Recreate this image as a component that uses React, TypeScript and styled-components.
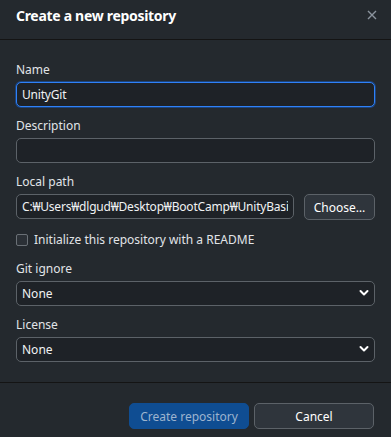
import React from "react";
import styled, { createGlobalStyle } from "styled-components";

const Global = createGlobalStyle`
  html, body { margin: 0; padding: 0; background: #24292e; }
  * { box-sizing: border-box; }
  body { font-family: "Noto Sans", "Open Sans", sans-serif; }
`;

const Dialog = styled.div`
  width: 391px;
  height: 437px;
  background: #24292e;
  color: #e1e4e8;
  display: flex;
  flex-direction: column;
  overflow: hidden;
`;

const Header = styled.div`
  height: 40px;
  padding: 0 16px;
  display: flex;
  align-items: center;
  justify-content: space-between;
  border-bottom: 1px solid #141414;
`;

const Title = styled.h1`
  margin: 0;
  font-size: 14px;
  font-weight: 700;
  color: #ffffff;
  letter-spacing: -0.3px;
  margin-top: -9px;
`;

const Close = styled.button`
  background: none;
  border: none;
  padding: 0;
  width: 12px;
  height: 12px;
  margin-top: -9px;
  margin-right: -3px;
  display: flex;
  align-items: center;
  justify-content: center;
  color: #8b949e;
`;

const Body = styled.div`
  padding: 22px 16px 0;
  display: flex;
  flex-direction: column;
`;

const Field = styled.div`
  display: flex;
  flex-direction: column;
  margin-bottom: 11px;
`;

const Label = styled.label`
  font-size: 12px;
  line-height: 16px;
  color: #e1e4e8;
  margin-bottom: 4px;
`;

const TextInput = styled.input<{ $focused?: boolean }>`
  height: 25px;
  width: 100%;
  min-width: 0;
  background: #1e2227;
  border: 1px solid ${(p) => (p.$focused ? "#2f81f7" : "#5c6268")};
  box-shadow: ${(p) => (p.$focused ? "0 0 0 1px rgba(20,100,220,0.45)" : "none")};
  border-radius: 5px;
  color: #f0f2f4;
  font-family: "Noto Sans", "Open Sans", sans-serif;
  font-size: 12px;
  letter-spacing: -0.2px;
  padding: 0 5px;
  outline: none;
  caret-color: #ffffff;
`;

const Row = styled.div`
  display: flex;
  gap: 10px;
`;

const Button = styled.button<{ $primary?: boolean; $w?: number }>`
  height: 26px;
  width: ${(p) => (p.$w ? `${p.$w}px` : "auto")};
  flex: none;
  border-radius: 5px;
  font-family: "Noto Sans", "Open Sans", sans-serif;
  font-size: 12px;
  padding: 0 6px;
  background: ${(p) => (p.$primary ? "#0f4d92" : "#2f353c")};
  border: 1px solid ${(p) => (p.$primary ? "#0f4d92" : "#5c6268")};
  color: ${(p) => (p.$primary ? "#9db4cf" : "#ffffff")};
`;

const CheckRow = styled.label`
  display: flex;
  align-items: center;
  gap: 6px;
  font-size: 12px;
  line-height: 18px;
  color: #e1e4e8;
  margin: 0 0 12px;
`;

const Box = styled.span`
  width: 12px;
  height: 12px;
  border: 1px solid #6a7076;
  border-radius: 2px;
  background: #2b3036;
  flex: none;
`;

const SelectWrap = styled.div`
  position: relative;
  height: 25px;
`;

const Select = styled.div`
  height: 25px;
  background: #1e2227;
  border: 1px solid #5c6268;
  border-radius: 5px;
  color: #f0f2f4;
  font-size: 12px;
  padding: 0 5px;
  display: flex;
  align-items: center;
`;

const Chevron = styled.svg`
  position: absolute;
  right: 6px;
  top: 8px;
`;

const Footer = styled.div`
  margin-top: 9px;
  border-top: 1px solid #141414;
  padding: 20px 17px 0 16px;
  display: flex;
  justify-content: flex-end;
  gap: 5px;
`;

const SelectField: React.FC<{ label: string; value: string }> = ({ label, value }) => (
  <Field>
    <Label>{label}</Label>
    <SelectWrap>
      <Select>{value}</Select>
      <Chevron width="10" height="8" viewBox="0 0 10 8">
        <path d="M1.5 2 L5 5.5 L8.5 2" fill="none" stroke="#ffffff" strokeWidth="2" strokeLinecap="round" strokeLinejoin="round" />
      </Chevron>
    </SelectWrap>
  </Field>
);

export default function App() {
  return (
    <>
      <Global />
      <Dialog>
        <Header>
          <Title>Create a new repository</Title>
          <Close aria-label="Close">
            <svg width="10" height="10" viewBox="0 0 10 10">
              <path d="M1 1 L9 9 M9 1 L1 9" stroke="#8b949e" strokeWidth="1.4" />
            </svg>
          </Close>
        </Header>
        <Body>
          <Field>
            <Label>Name</Label>
            <TextInput $focused defaultValue="UnityGit" autoFocus />
          </Field>
          <Field>
            <Label>Description</Label>
            <TextInput defaultValue="" />
          </Field>
          <Field>
            <Label>Local path</Label>
            <Row>
              <TextInput defaultValue="C:₩Users₩dlgud₩Desktop₩BootCamp₩UnityBasic" />
              <Button $w={71}>Choose…</Button>
            </Row>
          </Field>
          <CheckRow>
            <Box />
            Initialize this repository with a README
          </CheckRow>
          <SelectField label="Git ignore" value="None" />
          <SelectField label="License" value="None" />
        </Body>
        <Footer>
          <Button $primary $w={120}>Create repository</Button>
          <Button $w={120}>Cancel</Button>
        </Footer>
      </Dialog>
    </>
  );
}
